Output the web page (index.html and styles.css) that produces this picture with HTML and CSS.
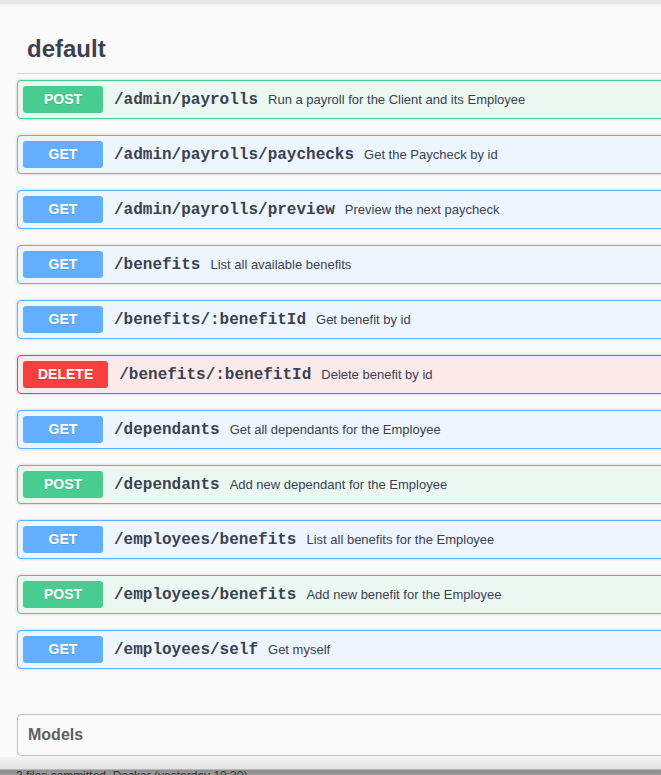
FILE: index.html
```html
<!DOCTYPE html>
<html>
<head>
<meta charset="utf-8">
<link rel="stylesheet" href="styles.css">
</head>
<body>
<div class="topbar"></div>
<div class="wrapper">
  <section class="tag-section">
    <h3 class="tag">default</h3>
    <div class="ops">
      <div class="op post"><span class="method">POST</span><span class="path">/admin/payrolls</span><span class="summary">Run a payroll for the Client and its Employee</span></div>
      <div class="op get"><span class="method">GET</span><span class="path">/admin/payrolls/paychecks</span><span class="summary">Get the Paycheck by id</span></div>
      <div class="op get"><span class="method">GET</span><span class="path">/admin/payrolls/preview</span><span class="summary">Preview the next paycheck</span></div>
      <div class="op get"><span class="method">GET</span><span class="path">/benefits</span><span class="summary">List all available benefits</span></div>
      <div class="op get"><span class="method">GET</span><span class="path">/benefits/:benefitId</span><span class="summary">Get benefit by id</span></div>
      <div class="op delete"><span class="method">DELETE</span><span class="path">/benefits/:benefitId</span><span class="summary">Delete benefit by id</span></div>
      <div class="op get"><span class="method">GET</span><span class="path">/dependants</span><span class="summary">Get all dependants for the Employee</span></div>
      <div class="op post"><span class="method">POST</span><span class="path">/dependants</span><span class="summary">Add new dependant for the Employee</span></div>
      <div class="op get"><span class="method">GET</span><span class="path">/employees/benefits</span><span class="summary">List all benefits for the Employee</span></div>
      <div class="op post"><span class="method">POST</span><span class="path">/employees/benefits</span><span class="summary">Add new benefit for the Employee</span></div>
      <div class="op get"><span class="method">GET</span><span class="path">/employees/self</span><span class="summary">Get myself</span></div>
    </div>
  </section>
  <section class="models">
    <h4 class="models-title">Models</h4>
  </section>
</div>
<div class="statusbar"><span class="status-text">3 files committed. Docker (yesterday 10:30)</span></div>
</body>
</html>
```

FILE: styles.css
```css
html, body {
  margin: 0;
  padding: 0;
  height: 775px;
  overflow: hidden;
  background: #fafafa;
  font-family: "Liberation Sans", Arial, sans-serif;
  color: #3b4151;
  position: relative;
}

.topbar {
  height: 4px;
  background: #e6e6e6;
  box-shadow: 0 1px 3px rgba(0,0,0,0.06);
}

.wrapper {
  width: 760px;
  padding: 21px 0 0 17px;
}

.tag {
  margin: 0 0 5px 0;
  padding: 10px 20px 10px 10px;
  font-size: 24px;
  line-height: 28px;
  font-weight: 700;
  color: #3b4151;
  border-bottom: 1px solid rgba(59,65,81,0.2);
}

.ops {
  display: flex;
  flex-direction: column;
  gap: 16px;
  padding-top: 1px;
}

.op {
  display: flex;
  align-items: center;
  padding: 5px;
  border: 1px solid;
  border-radius: 4px;
  box-shadow: 0 0 3px rgba(0,0,0,0.19);
}

.op.post { background: #ebf8f2; border-color: #49cc90; }
.op.get { background: #edf5fe; border-color: #61affe; }
.op.delete { background: #fceaea; border-color: #f93e3e; }

.method {
  min-width: 80px;
  box-sizing: border-box;
  padding: 0 15px;
  height: 27px;
  line-height: 27px;
  text-align: center;
  font-size: 14px;
  font-weight: 700;
  color: #fff;
  border-radius: 3px;
  text-shadow: 0 1px 0 rgba(0,0,0,0.1);
}

.post .method { background: #49cc90; }
.get .method { background: #61affe; }
.delete .method { background: #f93e3e; }

.path {
  padding: 0 10px;
  font-family: "Liberation Mono", "Courier New", monospace;
  font-size: 16px;
  font-weight: 700;
  color: #3b4151;
  margin-left: 1px;
}

.summary {
  font-size: 13px;
  color: #3b4151;
}

.models {
  margin-top: 45px;
  width: 740px;
  border: 1px solid rgba(59,65,81,0.3);
  border-radius: 4px;
}

.models-title {
  margin: 0;
  padding: 10px 20px 10px 10px;
  font-size: 16px;
  line-height: 20px;
  font-weight: 700;
  color: #606060;
}

.statusbar {
  position: absolute;
  left: 0;
  right: 0;
  bottom: 0;
  height: 18px;
  background: linear-gradient(to bottom, #f4f4f4 0, #e2e2e2 12px, #8e8e8e 13px, #9a9a9a 100%);
  overflow: hidden;
}

.status-text {
  position: absolute;
  left: 16px;
  top: 12px;
  font-size: 12px;
  color: #333;
}
```
